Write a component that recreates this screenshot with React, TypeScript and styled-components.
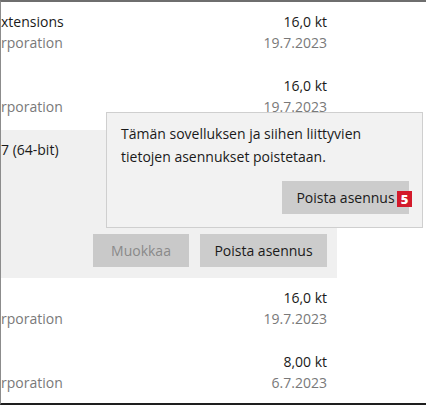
import React from 'react'
import styled, { createGlobalStyle } from 'styled-components'

const GlobalStyle = createGlobalStyle`
  html, body {
    margin: 0;
    padding: 0;
    background: #ffffff;
  }
  body {
    font-family: 'Open Sans', 'Noto Sans', sans-serif;
    -webkit-font-smoothing: antialiased;
  }
`

const Frame = styled.div`
  position: relative;
  width: 426px;
  height: 405px;
  box-sizing: border-box;
  border-top: 2px solid #6e6e6e;
  border-left: 1px solid #8c8c8c;
  border-bottom: 2px solid #1e1e1e;
  overflow: hidden;
  background: #ffffff;
`

const List = styled.div`
  width: 336px;
  display: flex;
  flex-direction: column;
`

const Row = styled.div`
  height: 64px;
  box-sizing: border-box;
  padding: 10px 10px 0 0;
  display: flex;
  justify-content: space-between;
`

const Expanded = styled.div`
  height: 148px;
  box-sizing: border-box;
  padding: 10px 10px 11px 0;
  background: #f0f0f0;
  display: flex;
  flex-direction: column;
  justify-content: space-between;
`

const Col = styled.div<{ $right?: boolean }>`
  display: flex;
  flex-direction: column;
  align-items: ${(p) => (p.$right ? 'flex-end' : 'flex-start')};
`

const Title = styled.div`
  font-size: 14px;
  line-height: 20px;
  color: #1a1a1a;
  white-space: nowrap;
`

const Sub = styled.div`
  font-size: 14px;
  line-height: 20px;
  margin-top: 1px;
  color: #797979;
  white-space: nowrap;
`

const Buttons = styled.div`
  display: flex;
  justify-content: flex-end;
  gap: 11px;
`

const Button = styled.button<{ $width: number; $disabled?: boolean }>`
  width: ${(p) => p.$width}px;
  height: 33px;
  border: none;
  padding: 0;
  background: ${(p) => (p.$disabled ? '#c9c9c9' : '#cccccc')};
  color: ${(p) => (p.$disabled ? '#8a8a8a' : '#1a1a1a')};
  font-family: inherit;
  font-size: 14px;
  cursor: default;
`

const Flyout = styled.div`
  position: absolute;
  left: 105px;
  top: 110px;
  width: 317px;
  height: 116px;
  box-sizing: border-box;
  background: #f2f2f2;
  border: 1px solid #cfcfcf;
  padding: 9px 13px 13px 14px;
  display: flex;
  flex-direction: column;
  justify-content: space-between;
`

const FlyoutText = styled.div`
  font-size: 14px;
  line-height: 23px;
  color: #1a1a1a;
`

const FlyoutAction = styled.div`
  display: flex;
  justify-content: flex-end;
`

const ActionWrap = styled.div`
  position: relative;
`

const Badge = styled.span`
  position: absolute;
  right: -3px;
  top: 10px;
  width: 15px;
  height: 16px;
  background: #d31a2b;
  color: #ffffff;
  font-family: 'Open Sans', sans-serif;
  font-weight: 800;
  font-size: 13px;
  line-height: 16px;
  text-align: center;
`

const apps = [
  { name: 'xtensions', publisher: 'rporation', size: '16,0 kt', date: '19.7.2023' },
  { name: '', publisher: 'rporation', size: '16,0 kt', date: '19.7.2023' },
]

const after = [
  { name: '', publisher: 'rporation', size: '16,0 kt', date: '19.7.2023' },
  { name: '', publisher: 'rporation', size: '8,00 kt', date: '6.7.2023' },
]

const AppRow = ({ app }: { app: typeof apps[number] }) => (
  <Row>
    <Col>
      <Title>{app.name || '\u00a0'}</Title>
      <Sub>{app.publisher}</Sub>
    </Col>
    <Col $right>
      <Title>{app.size}</Title>
      <Sub>{app.date}</Sub>
    </Col>
  </Row>
)

const App: React.FunctionComponent = () => {
  return (
    <>
      <GlobalStyle />
      <Frame>
        <List>
          {apps.map((a, i) => (
            <AppRow key={i} app={a} />
          ))}
          <Expanded>
            <Col>
              <Title>7 (64-bit)</Title>
            </Col>
            <Buttons>
              <Button $width={96} $disabled>Muokkaa</Button>
              <Button $width={127}>Poista asennus</Button>
            </Buttons>
          </Expanded>
          {after.map((a, i) => (
            <AppRow key={i} app={a} />
          ))}
        </List>
        <Flyout>
          <FlyoutText>
            Tämän sovelluksen ja siihen liittyvien
            <br />
            tietojen asennukset poistetaan.
          </FlyoutText>
          <FlyoutAction>
            <ActionWrap>
              <Button $width={127}>Poista asennus</Button>
              <Badge>5</Badge>
            </ActionWrap>
          </FlyoutAction>
        </Flyout>
      </Frame>
    </>
  )
}

export default App
